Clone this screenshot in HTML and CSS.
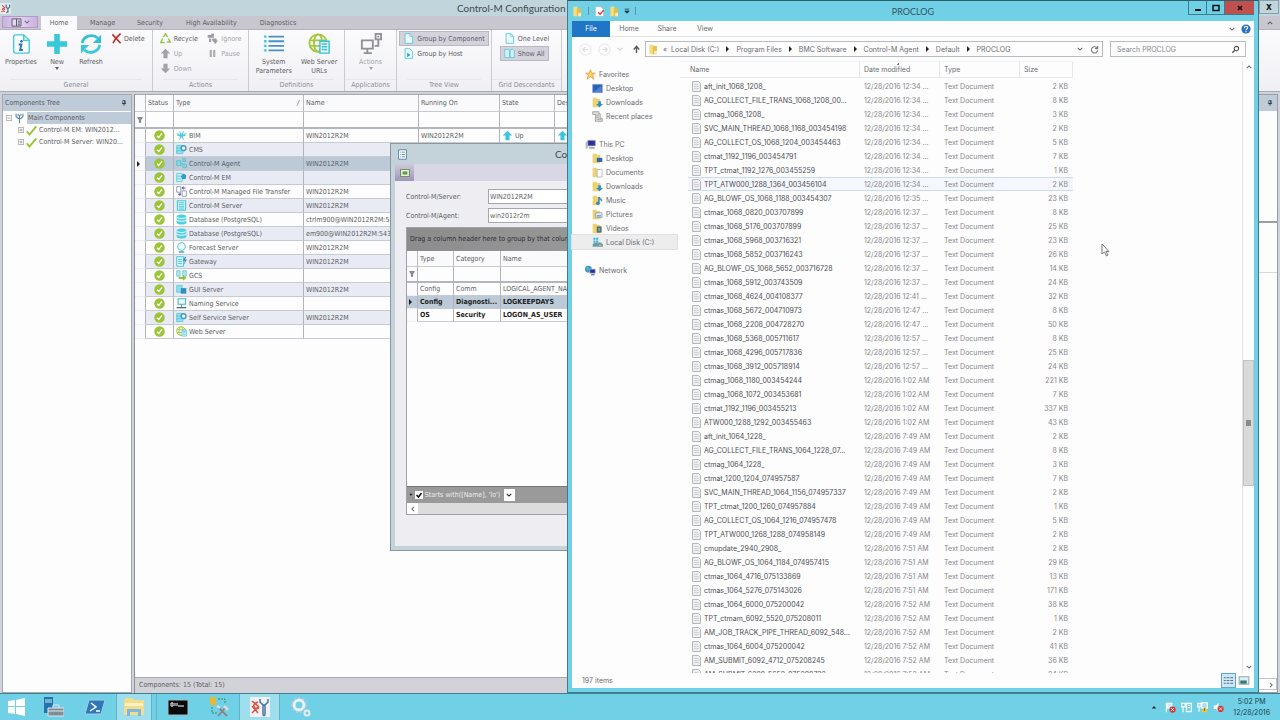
FILE: index.html
```
<!DOCTYPE html>
<html lang="en">

<head>
    <meta charset="UTF-8">
    <meta name="viewport" content="width=device-width, initial-scale=1.0">
    <title>Control-M Configuration Manager</title>
    <link rel="stylesheet" href="styles.css">
</head>

<body>
    <svg class="sprite" aria-hidden="true">
        <symbol id="i-ctm" viewBox="0 0 16 16"><rect width="16" height="16" fill="#e6e9ee"/><path d="M3 3l4 4-4 2M2 13l5-4M3 9l4 4" fill="none" stroke="#dd4b3a" stroke-width="1.5"/><path d="M9 2v4l2 2h1l2-2V2M11.500 8v6M9 14l2-1" fill="none" stroke="#45698f" stroke-width="1.600"/></symbol>
        <symbol id="i-props" viewBox="0 0 24 24"><path d="M4 5V4a2 2 0 0 1 2-2h9l6 6v12a2 2 0 0 1-2 2H6a2 2 0 0 1-2-2zM15 2v6h6" fill="#fafdfe" stroke="#40c8dc" stroke-width="1.500"/><circle cx="12.500" cy="9" r="1.500" fill="#2a79a8"/><path d="M9.500 12.500h3l-1.500 6h3" fill="none" stroke="#2a79a8" stroke-width="2"/></symbol>
        <symbol id="i-plus" viewBox="0 0 24 24"><path d="M9 1h6v8h8v6h-8v8H9v-8H1V9h8z" fill="#36c9d9"/></symbol>
        <symbol id="i-refresh" viewBox="0 0 24 24"><path d="M2.500 11a10 9 0 0 1 17-5.500" fill="none" stroke="#36bfd6" stroke-width="3"/><path d="M23 2v9h-9z" fill="#36bfd6"/><path d="M21.500 13a10 9 0 0 1-17 5.500" fill="none" stroke="#36c9d9" stroke-width="3"/><path d="M1 22v-9h9z" fill="#36c9d9"/></symbol>
        <symbol id="i-delete" viewBox="0 0 16 16"><path d="M2 2l12 13M14 1C9 5 5 10 3 15" fill="none" stroke="#c0251f" stroke-width="2.200"/></symbol>
        <symbol id="i-recycle" viewBox="0 0 16 16"><path d="M5 6l3-5 3 5M12 8l3 5h-5M7 14H1l3-6" fill="none" stroke="#8cc63f" stroke-width="2"/></symbol>
        <symbol id="i-up" viewBox="0 0 16 16"><path d="M8 1l7 7h-4v7H5V8H1z" fill="currentColor"/></symbol>
        <symbol id="i-down" viewBox="0 0 16 16"><path d="M8 15l7-7h-4V1H5v7H1z" fill="currentColor"/></symbol>
        <symbol id="i-ignore" viewBox="0 0 16 16"><path d="M1 3h5V1h4v6H1zM8 8h6v3h2l-4 5-4-5h-1zM3 8h3v5H3z" fill="#9c9ca2"/></symbol>
        <symbol id="i-pause" viewBox="0 0 16 16"><path d="M4 3h3v10H4zM9 3h3v10H9z" fill="#a9a9ae"/></symbol>
        <symbol id="i-list" viewBox="0 0 24 24"><path d="M1 4h3M1 9h3M1 14h3M1 19h3" stroke="#40cfe0" stroke-width="2.500"/><path d="M6 4h17M6 9h17M6 14h17M6 19h17" stroke="#4a92c4" stroke-width="2"/></symbol>
        <symbol id="i-globe" viewBox="0 0 24 24"><g fill="none" stroke="#a3c93a" stroke-width="2"><circle cx="11" cy="11" r="9.500"/><ellipse cx="11" cy="11" rx="4.500" ry="9.500"/><path d="M2 8h18M2 14h18"/></g><path d="M13 9h10v13H13z" fill="#e9fafc" stroke="#36c0d6" stroke-width="1.500"/><path d="M15 12h6M15 15h6M15 18h6" stroke="#36c0d6" stroke-width="1.500"/></symbol>
        <symbol id="i-actions" viewBox="0 0 24 24"><path d="M2 8h12v9H2zM8 17v4M4 22h9M17 1h6v6h-6zM20 7v7h-4M20 3v2" fill="none" stroke="#8f9096" stroke-width="2"/></symbol>
        <symbol id="i-page" viewBox="0 0 16 16"><path d="M3 1h7l4 4v10H3z" fill="#eefbfd" stroke="#52c9dc" stroke-width="1.300"/><path d="M10 1v4h4" fill="none" stroke="#52c9dc"/></symbol>
        <symbol id="i-pagehost" viewBox="0 0 16 16"><path d="M3 1h7l4 4v10H3z" fill="#eefbfd" stroke="#52c9dc" stroke-width="1.300"/><path d="M6 7l5 3-5 3z" fill="#2c9fc4"/></symbol>
        <symbol id="i-pages" viewBox="0 0 16 16"><path d="M1 2h5l2 2v10H1zM9 2h4l2 2v10H9z" fill="#d5eef4" stroke="#52c9dc" stroke-width="1.200"/></symbol>
        <symbol id="i-pin" viewBox="0 0 10 10"><path d="M3 1h4v5H3zM1.500 6h7M5 6v4M6 1v5" fill="none" stroke="#222"/></symbol>
        <symbol id="i-funnel" viewBox="0 0 10 10"><path d="M1 1h8L6 5v4H4V5z" fill="#999" stroke="#555"/></symbol>
        <symbol id="i-plusbox" viewBox="0 0 9 9"><path d="M.5.5h8v8h-8zM2 4.500h5M4.500 2v5" fill="#fff" stroke="#85858b"/></symbol>
        <symbol id="i-minusbox" viewBox="0 0 9 9"><path d="M.5.5h8v8h-8zM2 4.500h5" fill="#fff" stroke="#85858b"/></symbol>
        <symbol id="i-tool" viewBox="0 0 16 16"><path d="M3 1v4l3 3h4l3-3V1M8 3v12M6 1v3M10 1v3" fill="none" stroke="#5584a5" stroke-width="1.600"/></symbol>
        <symbol id="i-check" viewBox="0 0 16 16"><path d="M1 9l4 5L15 2" fill="none" stroke="#9bc22f" stroke-width="2.600"/></symbol>
        <symbol id="i-ok" viewBox="0 0 16 16"><circle cx="8" cy="8" r="7.600" fill="#9cc437"/><path d="M4.500 8.500L7 11l4.500-6" fill="none" stroke="#fff" stroke-width="2"/></symbol>
        <symbol id="i-bim" viewBox="0 0 16 16"><path d="M2 8h12M5 2l6 12M11 2L5 14M1 5l4 2M15 5l-4 2" stroke="#56cbde" stroke-width="1.500"/><circle cx="8" cy="8" r="3" fill="#56cbde"/></symbol>
        <symbol id="i-cms" viewBox="0 0 16 16"><path d="M1 2h9v12H1zM1 6h6M1 10h6" fill="#9adfea" stroke="#40c4da"/><circle cx="11" cy="6" r="3.500" fill="#fff" stroke="#3a9dc8" stroke-width="2"/></symbol>
        <symbol id="i-agent" viewBox="0 0 16 16"><path d="M1 4h6v7H1zM10 1h4v4h-4zM10 9h5v5h-5zM7 8h3" fill="#83d8e6" stroke="#45b9cf"/></symbol>
        <symbol id="i-em" viewBox="0 0 16 16"><path d="M1 2h8v12H1zM1 6h6M1 10h6" fill="#c5eef4" stroke="#40c4da"/><path d="M11 2l4 3-1 5H9L7 6z" fill="#2d9cc6"/></symbol>
        <symbol id="i-mft" viewBox="0 0 16 16"><path d="M1 1h6v8H1zM9 7h6v8H9z" fill="#fff" stroke="#6b7b95"/><path d="M9 3h5M11 1L9 3l2 2M7 12H3M5 10l2 2-2 2" fill="none" stroke="#6760b8" stroke-width="1.500"/></symbol>
        <symbol id="i-server" viewBox="0 0 16 16"><path d="M2 1h12v14H2z" fill="#dff6f9" stroke="#45c8dc" stroke-width="1.500"/><path d="M4 4h8M4 7h8M4 10h8M4 13h8" stroke="#45c8dc" stroke-width="1.500"/></symbol>
        <symbol id="i-db" viewBox="0 0 16 16"><path d="M1 3c3-3 11-3 14 0v10c-3 3-11 3-14 0z" fill="#4fd0de"/><path d="M1 5c3 2 11 2 14 0M1 9c3 2 11 2 14 0" fill="none" stroke="#fff" stroke-width="1.300"/></symbol>
        <symbol id="i-forecast" viewBox="0 0 16 16"><circle cx="8" cy="6.500" r="5.500" fill="#f2fcfd" stroke="#58c3dc" stroke-width="1.500"/><path d="M4 14.500h8" stroke="#3f9cb9" stroke-width="2"/></symbol>
        <symbol id="i-gateway" viewBox="0 0 16 16"><path d="M1 1h10v14H1zM3 5h6M3 8h6M3 11h6" fill="#e0f6f9" stroke="#40c4da" stroke-width="1.300"/><path d="M13 1l-3 6h3l-2 6 5-8h-3l2-4z" fill="#2d8fc0"/></symbol>
        <symbol id="i-gcs" viewBox="0 0 16 16"><path d="M1 1h5v8H1zM10 1h5v8h-5z" fill="#b4e8f0" stroke="#45c4d8"/><path d="M4 10h6V7l5 4.500-5 4V13H4z" fill="#93bf30"/></symbol>
        <symbol id="i-gui" viewBox="0 0 16 16"><path d="M1 2h8v10H1z" fill="#8edfea" stroke="#45c4d8"/><path d="M7 6h8v8H7z" fill="#2f8fc2"/></symbol>
        <symbol id="i-naming" viewBox="0 0 16 16"><path d="M3 1h11v8H3zM8 9v4" fill="#e9fafd" stroke="#43b4cf" stroke-width="1.500"/><path d="M1 14h14" stroke="#5d6a78" stroke-width="2"/></symbol>
        <symbol id="i-app" viewBox="0 0 12 14"><path d="M1 1h10v12H1z" fill="#fff" stroke="#3d6f9e"/><path d="M3 4h1M5 4h4M3 7h1M5 7h4M3 10h1M5 10h4" stroke="#3d6f9e"/></symbol>
        <symbol id="i-menu" viewBox="0 0 12 10"><path d="M1 1h10v8H1zM6 1v8M7.500 3.500H10M7.500 5.500H10M7.500 7.500H10" fill="#e4d8ef" stroke="#555066"/></symbol>
        <symbol id="i-folder" viewBox="0 0 16 16"><path d="M2 1h6v14H2z" fill="#f4dd83"/><path d="M7 3h6v12H7z" fill="#e3bf4c"/><path d="M9 10h4v5H9z" fill="#f9edb9"/></symbol>
        <symbol id="i-star" viewBox="0 0 16 16"><path d="M8 1l2 5h5l-4 3 2 6-5-4-5 4 2-6-4-3h5z" fill="#ffd05c" stroke="#e2932a"/></symbol>
        <symbol id="i-desktop" viewBox="0 0 16 16"><path d="M1 2h14v12H1z" fill="#2b62b8" stroke="#7d9ccc"/><path d="M2 13L14 4v9z" fill="#4b82d2"/></symbol>
        <symbol id="i-recent" viewBox="0 0 16 16"><path d="M1 1h9v3h2v7h3v4H5V5H1z" fill="#dfdfd9" stroke="#8b8c88"/><path d="M6 6h4M6 9h4M7 12h6" stroke="#8b8c88"/></symbol>
        <symbol id="i-pc" viewBox="0 0 16 16"><path d="M4 2h11v8H4z" fill="#2d2f9e" stroke="#9aa3c4"/><path d="M1 4h3v10H1z" fill="#b3b8c4"/><path d="M6 13h8" stroke="#8b90a0" stroke-width="2"/></symbol>
        <symbol id="i-fdesk" viewBox="0 0 16 16"><path d="M1 1h6v14H1zM7 3h5v12H7z" fill="#eed170"/><path d="M7 7h8v6H7z" fill="#3164ad"/></symbol>
        <symbol id="i-fdoc" viewBox="0 0 16 16"><path d="M1 1h6v14H1zM7 3h4v12H7z" fill="#eed170"/><path d="M7.500 3.500h7v11h-7z" fill="#fff" stroke="#9aa7b8"/></symbol>
        <symbol id="i-fdown" viewBox="0 0 16 16"><path d="M1 1h6v14H1zM7 3h5v12H7z" fill="#eed170"/><path d="M9 6h4v4h3l-5 5-5-5h3z" fill="#2b8fd0"/></symbol>
        <symbol id="i-fmusic" viewBox="0 0 16 16"><path d="M1 1h6v14H1zM7 3h5v12H7z" fill="#eed170"/><path d="M10 3v8M10 3c1 3 4 2 4 6" fill="none" stroke="#2d86c4" stroke-width="2"/><circle cx="8.500" cy="12" r="2.500" fill="#2d86c4"/></symbol>
        <symbol id="i-fpic" viewBox="0 0 16 16"><path d="M1 1h6v14H1zM7 3h5v12H7z" fill="#eed170"/><path d="M5.500 5.500h9v7h-9z" fill="#e6f0f7" stroke="#7392ad"/><path d="M7 9h6v2H7z" fill="#5f9cb8"/></symbol>
        <symbol id="i-fvid" viewBox="0 0 16 16"><path d="M1 1h6v14H1zM7 3h5v12H7z" fill="#eed170"/><path d="M7 5h7v9H7z" fill="#5a6470"/><path d="M9 7h3v5H9z" fill="#67b0a0"/></symbol>
        <symbol id="i-disk" viewBox="0 0 16 16"><path d="M2 1h3v3H2zM6 1h3v3H6zM2 5h3v3H2zM6 5h3v3H6z" fill="#2fb5de"/><path d="M1 10l3-2h9l3 3v3H1z" fill="#6f9ba6"/><path d="M10 12h4" stroke="#9ff0a0"/></symbol>
        <symbol id="i-network" viewBox="0 0 16 16"><circle cx="5" cy="6" r="5" fill="#3a97cf"/><path d="M2 3l4 1-2 5z" fill="#79c457"/><path d="M7 6h8v6H7z" fill="#2530a0" stroke="#b9c3dd"/><path d="M9 14h5" stroke="#6d7b94" stroke-width="2"/></symbol>
        <symbol id="i-txt" viewBox="0 0 9 11"><path d="M.5.5h6l2 2v8h-8z" fill="#eeeff0" stroke="#b4b6b9"/><path d="M2 3.500h4M2 5.500h5M2 7.500h5" stroke="#cfd1d4"/></symbol>
        <symbol id="i-chev" viewBox="0 0 8 8"><path d="M1 2.500l3 3 3-3" fill="none" stroke="currentColor" stroke-width="1.400"/></symbol>
        <symbol id="i-flagx" viewBox="0 0 16 16"><path d="M2 1v14M3 2h7v7H3z" fill="#c9ebf3" stroke="#fff" stroke-width="1.500"/><circle cx="11" cy="11" r="4.500" fill="#d63431"/><path d="M9 9l4 4M13 9l-4 4" stroke="#fff" stroke-width="1.300"/></symbol>
        <symbol id="i-nic" viewBox="0 0 16 16"><path d="M1 2h5v5H1zM3 7v8M8 2h7v12H8zM10 5h3M10 8h3" fill="none" stroke="#f4fbfd" stroke-width="1.800"/></symbol>
        <symbol id="i-netwarn" viewBox="0 0 16 16"><path d="M1 2h5v5H1zM3 7v7M7 1h8v8H7z" fill="#a9dfec" stroke="#eef9fc" stroke-width="1.800"/><path d="M11 6l5 9H6z" fill="#f2c62c"/><path d="M11 9v4" stroke="#333"/></symbol>
        <symbol id="i-volx" viewBox="0 0 16 16"><path d="M1 5h3l4-4v13l-4-4H1z" fill="#f4fbfd"/><circle cx="11" cy="10" r="4.500" fill="#d63431"/><path d="M9 8l4 4M13 8l-4 4" stroke="#fff" stroke-width="1.300"/></symbol>
    </svg>

    <div class="desktop">
        <!-- main application -->
        <div class="ccm">
            <header class="ccm-title">
                <svg class="ico"><use href="#i-ctm"/></svg>
                <span class="ccm-caption">Control-M Configuration</span>
                <button class="ccm-close" aria-label="Close">x</button>
            </header>
            <nav class="tabs">
                <button class="app-menu" aria-label="Application menu"><svg class="ico"><use href="#i-menu"/></svg><svg class="tiny"><use href="#i-chev"/></svg></button>
                <button class="tab active">Home</button>
                <button class="tab">Manage</button>
                <button class="tab wide">Security</button>
                <button class="tab wide">High Availability</button>
                <button class="tab wide">Diagnostics</button>
                <svg class="tiny collapse"><use href="#i-chev"/></svg>
            </nav>
            <section class="ribbon">
                <div class="group g-general">
                    <div class="tools">
                        <button class="big"><svg><use href="#i-props"/></svg>Properties</button>
                        <button class="big"><svg><use href="#i-plus"/></svg>New<i class="drop"></i></button>
                        <button class="big"><svg><use href="#i-refresh"/></svg>Refresh</button>
                        <div class="stack"><button class="small"><svg><use href="#i-delete"/></svg>Delete</button></div>
                    </div>
                    <div class="group-name">General</div>
                </div>
                <div class="group g-actions">
                    <div class="tools">
                        <div class="stack">
                            <button class="small"><svg><use href="#i-recycle"/></svg>Recycle</button>
                            <button class="small off"><svg><use href="#i-up"/></svg>Up</button>
                            <button class="small off"><svg><use href="#i-down"/></svg>Down</button>
                        </div>
                        <div class="stack">
                            <button class="small off"><svg><use href="#i-ignore"/></svg>Ignore</button>
                            <button class="small off"><svg><use href="#i-pause"/></svg>Pause</button>
                        </div>
                    </div>
                    <div class="group-name">Actions</div>
                </div>
                <div class="group g-defs">
                    <div class="tools">
                        <button class="big"><svg><use href="#i-list"/></svg>System<br>Parameters</button>
                        <button class="big"><svg><use href="#i-globe"/></svg>Web Server<br>URLs</button>
                    </div>
                    <div class="group-name">Definitions</div>
                </div>
                <div class="group g-apps">
                    <div class="tools">
                        <button class="big off"><svg><use href="#i-actions"/></svg>Actions<i class="drop"></i></button>
                    </div>
                    <div class="group-name">Applications</div>
                </div>
                <div class="group g-tree">
                    <div class="tools">
                        <div class="stack">
                            <button class="small on"><svg><use href="#i-page"/></svg>Group by Component</button>
                            <button class="small"><svg><use href="#i-pagehost"/></svg>Group by Host</button>
                        </div>
                    </div>
                    <div class="group-name">Tree View</div>
                </div>
                <div class="group g-desc">
                    <div class="tools">
                        <div class="stack">
                            <button class="small"><svg><use href="#i-page"/></svg>One Level</button>
                            <button class="small on"><svg><use href="#i-pages"/></svg>Show All</button>
                        </div>
                    </div>
                    <div class="group-name">Grid Descendants</div>
                </div>
            </section>

            <div class="panes">
                <aside class="tree">
                    <h2 class="pane-head">Components Tree<svg class="tiny"><use href="#i-pin"/></svg></h2>
                    <ul>
                        <li class="root"><svg class="box"><use href="#i-minusbox"/></svg><svg class="ico"><use href="#i-tool"/></svg><span>Main Components</span></li>
                        <li><svg class="box"><use href="#i-plusbox"/></svg><svg class="ico"><use href="#i-check"/></svg><span>Control-M EM: WIN2012...</span></li>
                        <li><svg class="box"><use href="#i-plusbox"/></svg><svg class="ico"><use href="#i-check"/></svg><span>Control-M Server: WIN20...</span></li>
                    </ul>
                </aside>
                <section class="grid-pane">
                    <table class="grid">
                        <colgroup><col class="c-ind"><col class="c-status"><col class="c-type"><col class="c-name"><col class="c-run"><col class="c-state"><col></colgroup>
                        <thead>
                            <tr><th></th><th>Status</th><th>Type<i class="sort">/</i></th><th>Name</th><th>Running On</th><th>State</th><th>Desired</th></tr>
                            <tr class="filter"><td><svg class="tiny"><use href="#i-funnel"/></svg></td><td></td><td></td><td></td><td></td><td></td><td></td></tr>
                        </thead>
                        <tbody id="components"></tbody>
                    </table>
                    <footer class="count">Components: 15 (Total: 15)</footer>
                </section>
                <aside class="dock">
                    <h2 class="pane-head"><svg class="tiny"><use href="#i-pin"/></svg></h2>
                    <div class="dock-top"></div>
                    <div class="dock-mid"></div>
                    <div class="dock-rest"></div>
                    <div class="dock-scroll"><svg class="tiny"><use href="#i-chev"/></svg></div>
                </aside>
            </div>
        </div>

        <!-- agent parameters dialog -->
        <div class="dialog">
            <header class="dialog-title"><svg class="ico"><use href="#i-app"/></svg><span>Co</span></header>
            <div class="dialog-bar"><button aria-label="Save"><svg viewBox="0 0 12 10"><path d="M.5.5h11v9H.5z" fill="#e9f5dc" stroke="#47763c"/><path d="M3 3h6v4H3z" fill="#5e9c48"/></svg></button></div>
            <div class="dialog-body">
                <div class="field"><label for="server">Control-M/Server:</label><input id="server" type="text" value="WIN2012R2M"></div>
                <div class="field"><label for="agent">Control-M/Agent:</label><input id="agent" type="text" value="win2012r2m"></div>
                <div class="params">
                    <div class="drag">Drag a column header here to group by that column</div>
                    <table class="grid">
                        <colgroup><col class="p-ind"><col class="p-type"><col class="p-cat"><col></colgroup>
                        <thead>
                            <tr><th></th><th>Type</th><th>Category</th><th>Name</th></tr>
                            <tr class="filter"><td><svg class="tiny"><use href="#i-funnel"/></svg></td><td></td><td></td><td></td></tr>
                        </thead>
                        <tbody>
                            <tr><td></td><td>Config</td><td>Comm</td><td>LOGICAL_AGENT_NAME</td></tr>
                            <tr class="sel strong"><td><i class="mark"></i></td><td>Config</td><td>Diagnosti...</td><td>LOGKEEPDAYS</td></tr>
                            <tr class="strong"><td></td><td>OS</td><td>Security</td><td>LOGON_AS_USER</td></tr>
                        </tbody>
                    </table>
                    <div class="blank"></div>
                    <div class="filter-bar">
                        <span>•</span>
                        <input id="flt" type="checkbox" checked>
                        <label for="flt">Starts with([Name], 'lo')</label>
                        <button aria-label="Filter list"><svg class="tiny"><use href="#i-chev"/></svg></button>
                    </div>
                    <div class="hscroll"><svg class="tiny left"><use href="#i-chev"/></svg></div>
                </div>
            </div>
        </div>

        <!-- file explorer -->
        <div class="explorer">
            <header class="ex-title">
                <div class="quick">
                    <svg class="ico"><use href="#i-folder"/></svg><i></i>
                    <svg class="ico" viewBox="0 0 16 16"><path d="M2 1h8l4 4v10H2z" fill="#fff" stroke="#a9b6c4"/><path d="M6 9l3 3 5-6" fill="none" stroke="#d8402d" stroke-width="2"/></svg>
                    <svg class="ico"><use href="#i-folder"/></svg>
                    <svg class="tiny" viewBox="0 0 8 8"><path d="M1 1.500h6M1 4h6L4 7z" fill="#234" stroke="#234"/></svg><i></i>
                </div>
                <h1>PROCLOG</h1>
                <div class="win-btns">
                    <button aria-label="Minimize"><svg viewBox="0 0 10 10"><path d="M2 7h6" stroke="#111" stroke-width="2"/></svg></button>
                    <button aria-label="Maximize"><svg viewBox="0 0 10 10"><path d="M2 2.500h6v5H2z" fill="none" stroke="#111" stroke-width="1.500"/></svg></button>
                    <button class="close" aria-label="Close"><svg viewBox="0 0 10 10"><path d="M3 3l4 4M7 3L3 7" stroke="#111" stroke-width="1.500"/></svg></button>
                </div>
            </header>
            <nav class="ex-tabs">
                <button class="file">File</button>
                <button>Home</button>
                <button>Share</button>
                <button>View</button>
                <svg class="tiny"><use href="#i-chev"/></svg>
                <svg class="help" viewBox="0 0 12 12"><circle cx="6" cy="6" r="5.500" fill="#2a6fc4"/><path d="M4 5c0-3 4-3 4-.5C8 6 6 6 6 7.500M6 8.500v1.300" fill="none" stroke="#fff" stroke-width="1.300"/></svg>
            </nav>
            <div class="ex-nav">
                <svg class="round" viewBox="0 0 14 14"><circle cx="7" cy="7" r="6" fill="none" stroke="#e1e2e4"/><path d="M10 7H4M6.500 4.500L4 7l2.500 2.500" fill="none" stroke="#dcdde0" stroke-width="1.300"/></svg>
                <svg class="round" viewBox="0 0 14 14"><circle cx="7" cy="7" r="6" fill="none" stroke="#e1e2e4"/><path d="M4 7h6M7.500 4.500L10 7 7.500 9.500" fill="none" stroke="#dcdde0" stroke-width="1.300"/></svg>
                <svg class="tiny pale"><use href="#i-chev"/></svg>
                <svg class="upbtn" viewBox="0 0 10 10"><path d="M5 9V2M2 5l3-3.500L8 5" fill="none" stroke="#555" stroke-width="1.500"/></svg>
                <div class="address">
                    <svg class="ico"><use href="#i-folder"/></svg>
                    <span>«</span>
                    <a href="#">Local Disk (C:)</a><i class="mark"></i>
                    <a href="#">Program Files</a><i class="mark"></i>
                    <a href="#">BMC Software</a><i class="mark"></i>
                    <a href="#">Control-M Agent</a><i class="mark"></i>
                    <a href="#">Default</a><i class="mark"></i>
                    <a href="#">PROCLOG</a>
                    <svg class="tiny end"><use href="#i-chev"/></svg>
                    <svg class="reload" viewBox="0 0 10 10"><path d="M8 3.500A3.500 3.500 0 1 0 8.500 6M8.500 1v3h-3" fill="none" stroke="#777" stroke-width="1.200"/></svg>
                </div>
                <div class="search">
                    <input type="text" placeholder="Search PROCLOG" aria-label="Search PROCLOG">
                    <svg viewBox="0 0 10 10"><circle cx="6" cy="4" r="2.500" fill="none" stroke="#555" stroke-width="1.200"/><path d="M4.200 5.800L1.500 8.500" stroke="#555" stroke-width="1.500"/></svg>
                </div>
            </div>
            <div class="ex-main">
                <ul class="places">
                    <li class="top"><svg class="ico"><use href="#i-star"/></svg>Favorites</li>
                    <li><svg class="ico"><use href="#i-desktop"/></svg>Desktop</li>
                    <li><svg class="ico"><use href="#i-fdown"/></svg>Downloads</li>
                    <li><svg class="ico"><use href="#i-recent"/></svg>Recent places</li>
                    <li class="top next"><svg class="ico"><use href="#i-pc"/></svg>This PC</li>
                    <li><svg class="ico"><use href="#i-fdesk"/></svg>Desktop</li>
                    <li><svg class="ico"><use href="#i-fdoc"/></svg>Documents</li>
                    <li><svg class="ico"><use href="#i-fdown"/></svg>Downloads</li>
                    <li><svg class="ico"><use href="#i-fmusic"/></svg>Music</li>
                    <li><svg class="ico"><use href="#i-fpic"/></svg>Pictures</li>
                    <li><svg class="ico"><use href="#i-fvid"/></svg>Videos</li>
                    <li class="current"><svg class="ico"><use href="#i-disk"/></svg>Local Disk (C:)</li>
                    <li class="top next"><svg class="ico"><use href="#i-network"/></svg>Network</li>
                </ul>
                <div class="listing">
                    <table class="files">
                        <colgroup><col class="f-gap"><col class="f-name"><col class="f-date"><col class="f-type"><col class="f-size"></colgroup>
                        <thead><tr><th></th><th>Name</th><th class="sorted">Date modified</th><th>Type</th><th>Size</th></tr></thead>
                        <tbody id="files"></tbody>
                    </table>
                </div>
                <div class="vscroll">
                    <svg class="tiny flip"><use href="#i-chev"/></svg>
                    <div class="thumb"></div>
                    <svg class="tiny"><use href="#i-chev"/></svg>
                </div>
            </div>
            <footer class="ex-status">
                <span>197 items</span>
                <svg class="view on" viewBox="0 0 14 14"><path d="M2 4h2M2 7h2M2 10h2M5 4h3M5 7h3M5 10h3M9 4h3M9 7h3M9 10h3" stroke="#4d6d86"/></svg>
                <svg class="view" viewBox="0 0 14 14"><path d="M3 3.500h9v7H3z" fill="#dfeef2" stroke="#96a7b2"/><path d="M4 7h6v3H4z" fill="#2d7c7c"/></svg>
            </footer>
        </div>

        <svg class="pointer" viewBox="0 0 9 14"><path d="M1 1v10l2.500-2 2 4 1.500-1-2-3.500h3z" fill="#fff" stroke="#777"/></svg>
    </div>

    <div class="taskbar">
        <button class="task" aria-label="Start"><svg viewBox="0 0 20 20"><path d="M1 4l7-1v6H1zM9 3l9-2v8H9zM1 10h7v7l-7-1zM9 10h9v9l-9-2z" fill="#fff"/></svg></button>
        <button class="task" aria-label="Server Manager"><svg viewBox="0 0 20 20"><path d="M0 0h9v16H0z" fill="#2274b0"/><path d="M1 3h7M1 5h7" stroke="#cde8f4"/><path d="M4 11h16v8H4z" fill="#7e8d97" stroke="#dfe6ea"/><path d="M9 11V8h6v3M4 14h16" fill="none" stroke="#dfe6ea"/></svg></button>
        <button class="task" aria-label="PowerShell"><svg viewBox="0 0 20 20"><path d="M4 3h16l-4 14H0z" fill="#2f78b5" stroke="#9fcfe8"/><path d="M6 6l5 4-6 4M11 14h4" fill="none" stroke="#fff" stroke-width="1.500"/></svg></button>
        <button class="task open" aria-label="File Explorer"><svg viewBox="0 0 20 20"><path d="M0 3l2-2h6l2 2h10v15H0z" fill="#f1dd8c"/><path d="M1 6h18v3H1z" fill="#fbf2c4"/><path d="M3 19v-7h14v7h-3v-4H6v4z" fill="#7fb8dd"/></svg></button>
        <i class="split"></i>
        <button class="task" aria-label="Command Prompt"><svg viewBox="0 0 20 20"><path d="M0 3h20v15H0z" fill="#0a0a0a" stroke="#a5b8bd"/><path d="M3 6h2v3H3zM7 6v3M9 6v3M10 9h6" fill="none" stroke="#fff"/></svg></button>
        <button class="task" aria-label="Setup tools"><svg viewBox="0 0 20 20"><path d="M1 0h6v8H1z" fill="#e8b92f"/><path d="M9 2h7v5M3 10v6h5" fill="none" stroke="#2d8a6a" stroke-dasharray="2 1"/><path d="M9 10l9 9M17 10l-8 9" stroke="#85868b" stroke-width="1.800"/><path d="M15 9l4 4M8 9l3 2" stroke="#dcdde0" stroke-width="2.500"/></svg></button>
        <button class="task open" aria-label="Control-M"><svg viewBox="0 0 20 20"><path d="M0 0h20v20H0z" fill="#eef2f6"/><path d="M2 4l6 5c2 2-1 4-3 2s-2-4 3-6M2 16l7-7M2 9l6 7" fill="none" stroke="#e0503c" stroke-width="1.500"/><path d="M10 2v3l3 3h2l3-3V2M13 8v9c0 2 2 2 2 0V8" fill="none" stroke="#45759f" stroke-width="1.500"/></svg></button>
        <button class="task" aria-label="Services"><svg viewBox="0 0 20 20"><circle cx="8" cy="8" r="5" fill="none" stroke="#eef3f7" stroke-width="3"/><circle cx="8" cy="8" r="7" fill="none" stroke="#bccbd8" stroke-width="2" stroke-dasharray="2 2"/><circle cx="16" cy="16" r="2.500" fill="none" stroke="#e3ebf1" stroke-width="2"/></svg></button>
        <div class="tray">
            <svg class="tiny" viewBox="0 0 8 8"><path d="M1 6l3-3.500L7 6z" fill="#122"/></svg>
            <svg class="ico"><use href="#i-flagx"/></svg>
            <svg class="ico"><use href="#i-nic"/></svg>
            <svg class="ico"><use href="#i-netwarn"/></svg>
            <svg class="ico"><use href="#i-volx"/></svg>
            <div class="clock"><span>5:02 PM</span><span>12/28/2016</span></div>
        </div>
    </div>
    <script src="script.js"></script>
</body>

</html>
```
FILE: styles.css
```
* {
    box-sizing: border-box;
}

html,
body {
    margin: 0;
    padding: 0;
}

body {
    height: 100vh;
    display: flex;
    flex-direction: column;
    overflow: hidden;
    font-family: "DejaVu Sans Condensed", "DejaVu Sans", sans-serif;
    font-size: 7px;
    color: #5c5d64;
}

button,
input {
    font: inherit;
    color: inherit;
    background: none;
    border: 0;
    padding: 0;
    margin: 0;
}

h1,
h2,
ul {
    margin: 0;
    padding: 0;
    font-weight: normal;
    list-style: none;
}

a {
    color: inherit;
    text-decoration: none;
}

svg {
    flex: none;
    display: block;
}

.sprite {
    position: absolute;
    width: 0;
    height: 0;
}

.ico {
    width: 11px;
    height: 11px;
}

.tiny {
    width: 6px;
    height: 6px;
}

.mark {
    display: block;
    width: 0;
    border: 3px solid transparent;
    border-left-color: #222;
    border-right: 0;
}

.desktop {
    flex: 1;
    min-height: 0;
    position: relative;
    overflow: hidden;
}

/* main application */
.ccm {
    height: 100%;
    display: flex;
    flex-direction: column;
    background: #cfd2d8;
}

.ccm-title {
    height: 16px;
    display: flex;
    align-items: center;
    background: #c1d5dc;
}

.ccm-caption {
    margin-left: 446px;
    font-family: Lato, sans-serif;
    font-size: 10px;
    color: #3f4a50;
}

.ccm-close {
    width: 20px;
    height: 14px;
    margin: 0 1px 2px auto;
    border: 1px solid #8d9ea6;
    font-size: 10px;
    font-weight: bold;
    line-height: 10px;
    color: #222;
}

.tabs {
    height: 14px;
    display: flex;
    align-items: stretch;
    background: #c8c6ce;
    border-bottom: 1px solid #b4b2ba;
}

.app-menu {
    width: 36px;
    margin: 0 3px 1px 2px;
    display: flex;
    align-items: center;
    justify-content: center;
    gap: 2px;
    color: #7a62a8;
    background: linear-gradient(to right, #c9b1dc, #e3d5ee, #c9b1dc);
    border: 1px solid #b49acb;
}

.app-menu .ico {
    width: 11px;
    height: 9px;
}

.tab {
    padding: 0 8px;
    margin-right: 5px;
}

.tab.wide {
    padding: 0 9px;
}

.tab.active {
    width: 36px;
    padding: 0;
    background: #fafafc;
    margin-bottom: -1px;
}

.collapse {
    margin: 4px 7px 0 auto;
    transform: rotate(180deg);
}

.ribbon {
    height: 62px;
    display: flex;
    background: linear-gradient(#fbfbfd, #f0eff4);
    border-bottom: 1px solid #a9a9b2;
}

.group {
    display: flex;
    flex-direction: column;
    border-right: 1px solid #cbcbd3;
}

.g-general {
    width: 153px;
}

.g-actions {
    width: 96px;
}

.g-defs {
    width: 96px;
}

.g-apps {
    width: 52px;
}

.g-tree {
    width: 95px;
}

.g-desc {
    width: 70px;
}

.tools {
    flex: 1;
    display: flex;
    justify-content: space-around;
    padding: 1px 2px 0;
}

.g-general .tools {
    justify-content: flex-start;
    padding-right: 0;
}

.g-general .big {
    min-width: 34px;
}

.g-general .big:first-child {
    width: 38px;
}

.g-general .small {
    padding: 0;
    gap: 2px;
}

.g-general .stack {
    padding-left: 2px;
}

.group-name {
    height: 12px;
    line-height: 11px;
    margin: 0 10px;
    text-align: center;
    white-space: nowrap;
    color: #8d8e96;
    border-top: 1px solid #e6e6ec;
}

.g-desc .group-name,
.g-apps .group-name {
    margin: 0;
}

.big {
    display: flex;
    flex-direction: column;
    align-items: center;
    line-height: 9px;
}

.big svg {
    width: 22px;
    height: 22px;
    margin: 2px 0 3px;
}

.drop {
    border: 2px solid transparent;
    border-top: 3px solid currentColor;
    border-bottom: 0;
}

.stack {
    display: flex;
    flex-direction: column;
    align-items: flex-start;
}

.small {
    height: 15px;
    display: flex;
    align-items: center;
    gap: 3px;
    padding: 0 3px;
    white-space: nowrap;
    border: 1px solid transparent;
}

.small svg {
    width: 11px;
    height: 11px;
}

.small.on {
    background: #d4d3dc;
    border-color: #b9b8c3;
}

.off {
    color: #a2a3a9;
}

.panes {
    flex: 1;
    min-height: 0;
    display: flex;
    gap: 2px;
    padding: 2px 2px 0;
}

.tree {
    width: 130px;
    background: #fdfdfe;
    border: 1px solid #a4a8b1;
}

.tree ul {
    padding-top: 1px;
}

.pane-head {
    height: 16px;
    padding: 0 4px 0 2px;
    display: flex;
    align-items: center;
    justify-content: space-between;
    font-size: 7px;
    background: #bfcbd8;
}

.tree li {
    height: 12px;
    padding-left: 15px;
    display: flex;
    align-items: center;
    gap: 2px;
    white-space: nowrap;
}

.tree .root {
    padding-left: 3px;
}

.tree .root span {
    flex: 1;
    padding-left: 1px;
    line-height: 12px;
    background: #bfcbd8;
}

.box {
    width: 6px;
    height: 6px;
}

.grid-pane {
    flex: 1;
    min-width: 0;
    display: flex;
    flex-direction: column;
    background: #fdfdfe;
    border-left: 1px solid #8d9098;
    border-top: 1px solid #a4a8b1;
}

.grid {
    width: 100%;
    table-layout: fixed;
    border-collapse: separate;
    border-spacing: 0;
}

.grid th {
    height: 16px;
    padding: 0 2px;
    text-align: left;
    font-weight: normal;
    background: #fafafc;
    border-right: 1px solid #b9bbc2;
    border-bottom: 1px solid #c8cad0;
}

.grid td {
    height: 14px;
    padding: 0 2px;
    white-space: nowrap;
    overflow: hidden;
    border-right: 1px solid #b0b3bb;
    border-bottom: 1px solid #c6cad3;
}

.grid td:first-child {
    background: #fbfbfd;
    border-bottom-color: #eeeef2;
}

.grid .filter td {
    height: 16px;
    border-bottom: 2px solid #b4b6bd;
}

.grid-pane .grid th,
.grid-pane .grid .filter td {
    height: 17px;
}

.sort {
    float: right;
    margin-right: 2px;
}

.c-ind {
    width: 11px;
}

.c-status {
    width: 28px;
}

.c-type {
    width: 130px;
}

.c-name {
    width: 115px;
}

.c-run {
    width: 81px;
}

.c-state {
    width: 55px;
}

#components tr:nth-child(even) td {
    background: #e8ebf4;
}

#components tr.sel td {
    background: #bccad8;
}

#components tr td:first-child {
    background: #fbfbfd;
}

.cell {
    display: flex;
    align-items: center;
    gap: 2px;
}

.cell.mid {
    justify-content: center;
}

.arrow {
    color: #3fc5da;
}

.count {
    margin-top: auto;
    height: 16px;
    padding-left: 4px;
    line-height: 15px;
    background: #d3d2d9;
    border-top: 1px solid #a4a8b1;
}

.dock {
    width: 120px;
    display: flex;
    flex-direction: column;
    background: #fdfdfe;
    border: 1px solid #9c9ea6;
}

.dock .pane-head {
    justify-content: flex-end;
}

.dock-top {
    height: 112px;
    border-bottom: 2px solid #9c9ea6;
}

.dock-mid {
    height: 50px;
    border-bottom: 1px solid #d8d8dc;
}

.dock-rest {
    flex: 1;
}

.dock-scroll {
    height: 12px;
    padding: 3px 2px;
    margin-bottom: 2px;
    display: flex;
    justify-content: flex-end;
    border: 1px solid #c4c5ca;
}

.dock-scroll svg {
    transform: rotate(-90deg);
}

/* dialog */
.dialog {
    position: absolute;
    left: 390px;
    top: 143px;
    width: 480px;
    height: 408px;
    padding: 0 4px 4px;
    display: flex;
    flex-direction: column;
    background: #c3d3d9;
    border: 1px solid #8b979d;
}

.dialog-title {
    height: 20px;
    padding-left: 2px;
    display: flex;
    align-items: center;
    font-family: Lato, sans-serif;
    font-size: 10px;
    color: #3f4a50;
}

.dialog-title span {
    margin-left: 147px;
}

.dialog-bar {
    height: 17px;
    background: #d9d6e6;
}

.dialog-bar button {
    width: 19px;
    height: 17px;
    display: flex;
    align-items: center;
    justify-content: center;
    background: linear-gradient(#cfc9dc, #9f96b8);
}

.dialog-bar svg {
    width: 10px;
    height: 8px;
}

.dialog-body {
    flex: 1;
    min-height: 0;
    padding: 8px 11px 31px;
    display: flex;
    flex-direction: column;
    background: #eeeef2;
}

.field {
    height: 15px;
    margin-bottom: 4px;
    display: flex;
    align-items: center;
}

.field label {
    width: 82px;
}

.field input {
    flex: 1;
    height: 15px;
    padding: 0 1px;
    background: #fff;
    border: 1px solid #a5a7ae;
}

.params {
    flex: 1;
    display: flex;
    flex-direction: column;
    border: 1px solid #a0a0a6;
    background: #fdfdfe;
}

.drag {
    height: 23px;
    padding-left: 3px;
    line-height: 22px;
    color: #2f2f33;
    background: linear-gradient(to right, #8c8c8c, #ababab);
}

.params .grid tbody td {
    height: 13px;
}

.p-ind {
    width: 11px;
}

.p-type {
    width: 36px;
}

.p-cat {
    width: 47px;
}

.params .sel td {
    background: #bccad8;
}

.strong {
    font-weight: bold;
    color: #1d1d22;
}

.blank {
    flex: 1;
}

.filter-bar {
    height: 17px;
    padding-left: 2px;
    display: flex;
    align-items: center;
    gap: 2px;
    color: #ececec;
    background: #9a9a9b;
    border-top: 1px solid #77777a;
}

.filter-bar span {
    color: #111;
}

.filter-bar input {
    width: 8px;
    height: 8px;
    appearance: none;
    background: #fff url("data:image/svg+xml,%3Csvg xmlns='http://www.w3.org/2000/svg' viewBox='0 0 8 8'%3E%3Cpath d='M1.500 4l2 2 3-4' fill='none' stroke='%23111' stroke-width='1.500'/%3E%3C/svg%3E");
}

.filter-bar button {
    width: 11px;
    height: 12px;
    margin-left: 2px;
    padding: 2px;
    color: #222;
    background: #fff;
}

.hscroll {
    height: 11px;
    display: flex;
    align-items: center;
    background: linear-gradient(to right, #fff 11px, #dcdcdd 11px);
}

.left {
    margin-left: 3px;
    transform: rotate(90deg);
}

/* explorer */
.explorer {
    position: absolute;
    left: 567px;
    right: 21px;
    top: 0;
    bottom: 0;
    padding: 0 4px 4px;
    display: flex;
    flex-direction: column;
    font-family: Inter, "Open Sans", sans-serif;
    color: #6b6c70;
    background: #6fd0e6;
    border: 1px solid #3f7c8b;
    border-top-color: #2c5d69;
}

.ex-title {
    height: 20px;
    display: grid;
    grid-template-columns: 1fr auto 1fr;
    align-items: center;
    flex: none;
}

.quick {
    display: flex;
    align-items: center;
    gap: 4px;
    color: #234;
}

.quick i {
    width: 1px;
    height: 8px;
    margin: 0 1px;
    background: #5f97a6;
}

.ex-title h1 {
    font-family: Lato, sans-serif;
    font-size: 9px;
    color: #35545e;
}

.win-btns {
    display: flex;
    align-self: start;
    justify-content: flex-end;
}

.win-btns button {
    width: 18px;
    height: 14px;
    padding: 1px 4px;
    border: 1px solid #3f7c8b;
    border-top: 0;
    border-right: 0;
}

.win-btns svg {
    width: 10px;
    height: 10px;
}

.win-btns .close {
    width: 30px;
    padding-left: 10px;
    background: #c0504d;
}

.ex-tabs {
    height: 16px;
    flex: none;
    display: flex;
    align-items: center;
    background: #fdfdfd;
    border-bottom: 1px solid #e2e3e5;
}

.ex-tabs button {
    width: 38px;
}

.ex-tabs .file {
    height: 16px;
    color: #fff;
    background: #1f75c6;
}

.ex-tabs .tiny {
    margin: 0 6px 0 auto;
}

.help {
    width: 10px;
    height: 10px;
    margin-right: 3px;
}

.ex-nav {
    height: 24px;
    padding: 0 8px 0 7px;
    flex: none;
    display: flex;
    align-items: center;
    background: #fdfdfd;
}

.round {
    width: 13px;
    height: 13px;
    margin-right: 6px;
}

.pale {
    color: #d0d0d4;
}

.upbtn {
    width: 9px;
    height: 9px;
    margin: 0 4px 0 9px;
}

.address {
    flex: 1;
    height: 16px;
    padding: 0 3px 0 2px;
    display: flex;
    align-items: center;
    gap: 7px;
    white-space: nowrap;
    border: 1px solid #b9bbbf;
}

.address span {
    margin: 0 -3px;
}

.address .end {
    margin-left: auto;
}

.reload {
    width: 9px;
    height: 9px;
}

.search {
    width: 136px;
    height: 16px;
    margin-left: 7px;
    padding-right: 5px;
    display: flex;
    align-items: center;
    border: 1px solid #b9bbbf;
}

.search input {
    flex: 1;
    min-width: 0;
    padding-left: 6px;
}

.search input::placeholder {
    color: #85868a;
    opacity: 1;
}

.search svg {
    width: 9px;
    height: 9px;
}

.ex-main {
    flex: 1;
    min-height: 0;
    display: flex;
    background: #fdfdfe;
}

.places {
    width: 108px;
    padding: 6px 3px 0 0;
}

.places li {
    height: 14px;
    padding-left: 20px;
    display: flex;
    align-items: center;
    gap: 3px;
}

.places .top {
    padding-left: 13px;
}

.places .next {
    margin-top: 14px;
}

.places .current {
    background: #ededee;
    outline: 1px solid #e0e0e2;
}

.listing {
    flex: 1;
    overflow: hidden;
}

.files {
    width: 393px;
    table-layout: fixed;
    border-collapse: separate;
    border-spacing: 0;
}

.files th {
    height: 17px;
    padding: 0 4px;
    text-align: left;
    font-weight: normal;
    border-right: 1px solid #e6e7ea;
    border-bottom: 1px solid #e6e7ea;
    border-top: 1px solid #f0f1f3;
}

.files th:first-child {
    border-right: 0;
}

.files th:nth-child(2) {
    padding-left: 2px;
}

.files .sorted {
    background: linear-gradient(135deg, transparent 50%, #777 50%) no-repeat 36px 0 / 3px 3px;
}

.files td {
    height: 14px;
    padding: 0 4px;
    white-space: nowrap;
    color: #85868a;
    border-top: 1px solid transparent;
    border-bottom: 1px solid transparent;
}

.files tbody::before {
    content: "";
    display: block;
    height: 1px;
}

.files td:nth-child(2) {
    color: #4c4d52;
}

.files td:last-child {
    padding-right: 5px;
    text-align: right;
}

.files .hover td:not(:first-child) {
    background: #f4f7fd;
    border-color: #cfdaf0;
}

.files .cell {
    gap: 3px;
}

.files svg {
    width: 9px;
    height: 11px;
}

.f-gap {
    width: 8px;
}

.f-name {
    width: 172px;
}

.f-date {
    width: 80px;
}

.f-type {
    width: 80px;
}

.f-size {
    width: 53px;
}

.vscroll {
    width: 12px;
    padding: 3px 0;
    display: flex;
    flex-direction: column;
    align-items: center;
    border-left: 1px solid #e2e3e5;
}

.flip {
    transform: rotate(180deg);
}

.thumb {
    width: 11px;
    height: 126px;
    margin: auto 0 178px;
    background: linear-gradient(#8a8a8c, #8a8a8c) no-repeat center / 5px 6px #d9d9da;
    border: 1px solid #c2c2c4;
}

.ex-status {
    height: 15px;
    flex: none;
    padding: 0 3px 0 10px;
    display: flex;
    align-items: center;
    background: #fdfdfe;
}

.ex-status span {
    flex: 1;
}

.view {
    width: 15px;
    height: 15px;
}

.view.on {
    background: #cfe6f4;
    border: 1px solid #62a3c9;
}

.pointer {
    position: absolute;
    left: 1101px;
    top: 243px;
    width: 9px;
    height: 14px;
}

/* taskbar */
.taskbar {
    height: 27px;
    display: flex;
    align-items: stretch;
    background: #6fd0e6;
    border-top: 1px solid #3e7f90;
}

.task {
    width: 41px;
    display: flex;
    align-items: center;
    justify-content: center;
}

.task:first-child {
    width: 33px;
}

.task svg {
    width: 20px;
    height: 20px;
}

.task.open {
    background: #9fdeed;
    border-left: 1px solid #5fb2c5;
    border-right: 1px solid #5fb2c5;
}

.task.open:nth-child(4) {
    width: 36px;
    margin-left: 1px;
}

.split {
    width: 5px;
    border-right: 1px solid #5fb2c5;
}

.tray {
    margin-left: auto;
    padding-right: 10px;
    display: flex;
    align-items: center;
    gap: 5px;
}

.tray .tiny {
    margin-right: 3px;
}

.tray .ico {
    width: 11px;
    height: 11px;
}

.clock {
    margin-left: 4px;
    display: flex;
    flex-direction: column;
    align-items: center;
    font-family: Inter, "Open Sans", sans-serif;
    line-height: 11px;
    color: #1d4350;
}
```
FILE: script.js
```
const components = [
    ['bim', 'BIM', 'WIN2012R2M'],
    ['cms', 'CMS', ''],
    ['agent', 'Control-M Agent', 'WIN2012R2M'],
    ['em', 'Control-M EM', ''],
    ['mft', 'Control-M Managed File Transfer', 'WIN2012R2M'],
    ['server', 'Control-M Server', 'WIN2012R2M'],
    ['db', 'Database (PostgreSQL)', 'ctrlm900@WIN2012R2M:5432'],
    ['db', 'Database (PostgreSQL)', 'em900@WIN2012R2M:5432'],
    ['forecast', 'Forecast Server', 'WIN2012R2M'],
    ['gateway', 'Gateway', 'WIN2012R2M'],
    ['gcs', 'GCS', ''],
    ['gui', 'GUI Server', 'WIN2012R2M'],
    ['naming', 'Naming Service', ''],
    ['cms', 'Self Service Server', 'WIN2012R2M'],
    ['globe', 'Web Server', '']
];

// name, time, size in KB
const files = [
    ['aft_init_1068_1208_', '12:34 ...', 2],
    ['AG_COLLECT_FILE_TRANS_1068_1208_00...', '12:34 ...', 8],
    ['ctmag_1068_1208_', '12:34 ...', 3],
    ['SVC_MAIN_THREAD_1068_1168_003454198', '12:34 ...', 2],
    ['AG_COLLECT_OS_1068_1204_003454463', '12:34 ...', 5],
    ['ctmat_1192_1196_003454791', '12:34 ...', 7],
    ['TPT_ctmat_1192_1276_003455259', '12:34 ...', 1],
    ['TPT_ATW000_1288_1364_003456104', '12:34 ...', 2],
    ['AG_BLOWF_OS_1068_1188_003454307', '12:35 ...', 23],
    ['ctmas_1068_0820_003707899', '12:37 ...', 8],
    ['ctmas_1068_5176_003707899', '12:37 ...', 25],
    ['ctmas_1068_5968_003716321', '12:37 ...', 23],
    ['ctmas_1068_5852_003716243', '12:37 ...', 26],
    ['AG_BLOWF_OS_1068_5652_003716728', '12:37 ...', 14],
    ['ctmas_1068_5912_003743509', '12:37 ...', 24],
    ['ctmas_1068_4624_004108377', '12:41 ...', 32],
    ['ctmas_1068_5672_004710973', '12:47 ...', 8],
    ['ctmas_1068_2208_004728270', '12:47 ...', 50],
    ['ctmas_1068_5368_005711617', '12:57 ...', 8],
    ['ctmas_1068_4296_005717836', '12:57 ...', 25],
    ['ctmas_1068_3912_005718914', '12:57 ...', 24],
    ['ctmag_1068_1180_003454244', '1:02 AM', 221],
    ['ctmag_1068_1072_003453681', '1:02 AM', 7],
    ['ctmat_1192_1196_003455213', '1:02 AM', 337],
    ['ATW000_1288_1292_003455463', '1:02 AM', 43],
    ['aft_init_1064_1228_', '7:49 AM', 2],
    ['AG_COLLECT_FILE_TRANS_1064_1228_07...', '7:49 AM', 8],
    ['ctmag_1064_1228_', '7:49 AM', 3],
    ['ctmat_1200_1204_074957587', '7:49 AM', 7],
    ['SVC_MAIN_THREAD_1064_1156_074957337', '7:49 AM', 2],
    ['TPT_ctmat_1200_1260_074957884', '7:49 AM', 1],
    ['AG_COLLECT_OS_1064_1216_074957478', '7:49 AM', 5],
    ['TPT_ATW000_1268_1288_074958149', '7:49 AM', 2],
    ['cmupdate_2940_2908_', '7:51 AM', 2],
    ['AG_BLOWF_OS_1064_1184_074957415', '7:51 AM', 29],
    ['ctmas_1064_4716_075133869', '7:51 AM', 13],
    ['ctmas_1064_5276_075143026', '7:51 AM', 171],
    ['ctmas_1064_6000_075200042', '7:52 AM', 38],
    ['TPT_ctmam_6092_5520_075208011', '7:52 AM', 1],
    ['AM_JOB_TRACK_PIPE_THREAD_6092_548...', '7:52 AM', 2],
    ['ctmas_1064_6004_075200042', '7:52 AM', 41],
    ['AM_SUBMIT_6092_4712_075208245', '7:52 AM', 36],
    ['AM_SUBMIT_6288_5652_075208732', '7:52 AM', 84]
];

const icon = (id, cls) => `<svg class="${cls}"><use href="#i-${id}"/></svg>`;

document.getElementById('components').innerHTML = components.map((c, i) => {
    let up = i === 0 ? `<div class="cell">${icon('up', 'ico arrow')}Up</div>` : '';
    let host = i === 0 ? 'WIN2012R2M' : '';
    return `<tr class="${i === 2 ? 'sel' : ''}">
        <td>${i === 2 ? '<i class="mark"></i>' : ''}</td>
        <td><div class="cell mid">${icon('ok', 'ico')}</div></td>
        <td><div class="cell">${icon(c[0], 'ico')}${c[1]}</div></td>
        <td>${c[2]}</td><td>${host}</td><td>${up}</td><td>${up}</td>
    </tr>`;
}).join('');

document.getElementById('files').innerHTML = files.map((f, i) => `<tr class="${i === 7 ? 'hover' : ''}">
        <td></td>
        <td><div class="cell">${icon('txt', 'doc')}${f[0]}</div></td>
        <td>12/28/2016 ${f[1]}</td>
        <td>Text Document</td>
        <td>${f[2]} KB</td>
    </tr>`).join('');
```
